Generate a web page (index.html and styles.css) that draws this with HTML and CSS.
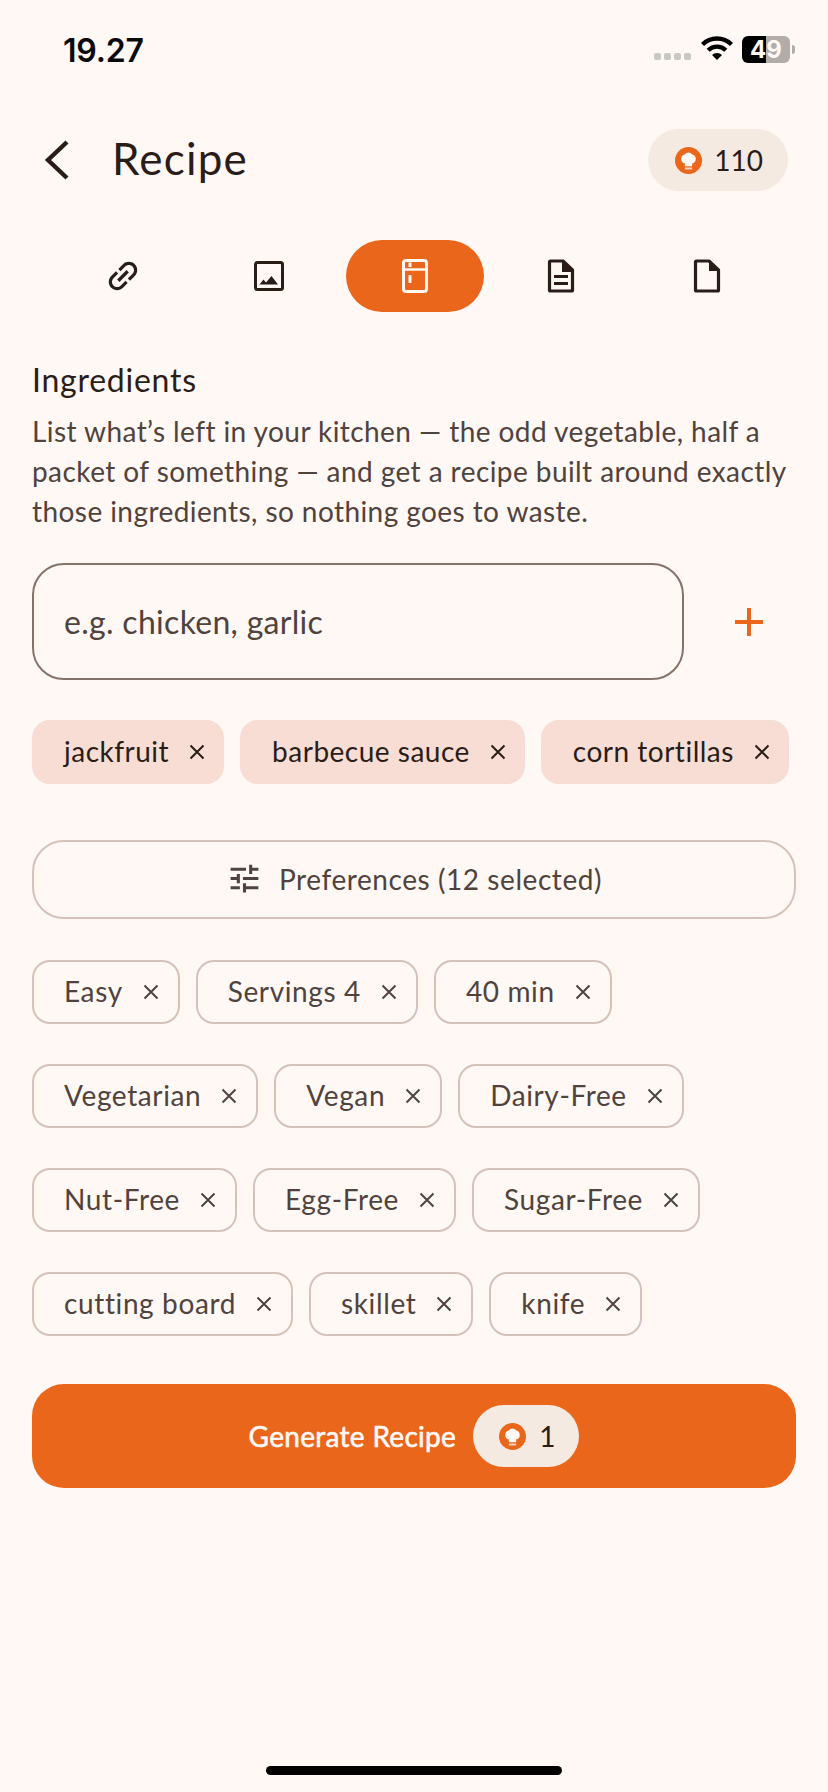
FILE: index.html
```html
<!DOCTYPE html>
<html lang="en">
<head>
<meta charset="utf-8">
<title>Recipe</title>
<link rel="stylesheet" href="styles.css">
</head>
<body>
<svg class="defs" width="0" height="0" aria-hidden="true">
  <defs>
    <symbol id="hat" viewBox="0 0 26 26">
      <circle cx="13" cy="13" r="13" fill="#E9661B"/>
      <path d="M9.500 18.500v-2.600A4.600 4.600 0 0 1 6 11.500 4.400 4.400 0 0 1 9.300 7.300a4.500 4.500 0 0 1 7.400 0A4.400 4.400 0 0 1 20 11.500a4.600 4.600 0 0 1-3.500 4.400v2.600z" fill="#FFF8F5"/>
      <rect x="9.500" y="19.800" width="7" height="1.800" fill="#F7D9C6"/>
    </symbol>
    <symbol id="x" viewBox="0 0 16 16">
      <path d="M1.500 1.500l13 13M14.500 1.500l-13 13" fill="none" stroke="currentColor" stroke-width="2"/>
    </symbol>
  </defs>
</svg>
<main class="app">
  <div class="status">
    <span class="time">19.27</span>
    <div class="status-right">
      <div class="signal"><i></i><i></i><i></i><i></i></div>
      <svg class="wifi" viewBox="0 0 32 24"><path d="M1.500 8.500a20.500 20.500 0 0 1 29 0M7.200 14.200a12.500 12.500 0 0 1 17.600 0" fill="none" stroke="#000" stroke-width="4.400"/><path d="M16 24l-5-5a7 7 0 0 1 10 0z" fill="#000"/></svg>
      <div class="battery">49</div>
      <div class="nub"></div>
    </div>
  </div>

  <header class="header">
    <button class="back" aria-label="Back"><svg viewBox="0 0 26 42" width="26" height="42"><path d="M23 3L4 21l19 18" fill="none" stroke="#2A1D18" stroke-width="4.400"/></svg></button>
    <h1 class="title">Recipe</h1>
    <div class="credits"><svg class="hat"><use href="#hat"/></svg><span>110</span></div>
  </header>

  <nav class="tabs">
    <div class="tab"><svg viewBox="0 0 24 24" width="40" height="40"><path transform="rotate(-45 12 12)" fill="#2A1D18" d="M3.900 12c0-1.710 1.390-3.100 3.100-3.100h4V7H7c-2.760 0-5 2.240-5 5s2.240 5 5 5h4v-1.900H7c-1.710 0-3.100-1.390-3.100-3.100zM8 13h8v-2H8v2zm9-6h-4v1.900h4c1.710 0 3.100 1.390 3.100 3.100s-1.390 3.100-3.100 3.100h-4V17h4c2.760 0 5-2.240 5-5s-2.240-5-5-5z"/></svg></div>
    <div class="tab"><svg viewBox="0 0 40 40" width="40" height="40"><rect x="6.500" y="6.500" width="27" height="27" rx="2" fill="none" stroke="#2A1D18" stroke-width="3"/><path d="M10.500 28.500l4-5 2.500 3 5.500-6.500 6.500 8.500z" fill="#2A1D18"/></svg></div>
    <div class="tab tab-active"><svg viewBox="0 0 40 40" width="40" height="40"><rect x="8.500" y="4.500" width="23" height="31" rx="2.500" fill="none" stroke="#FFF8F5" stroke-width="3"/><path d="M8 13.500h24" stroke="#FFF8F5" stroke-width="2.500"/><path d="M15 6.500v4.500M15 19v8" stroke="#FFF8F5" stroke-width="3"/></svg></div>
    <div class="tab"><svg viewBox="0 0 40 40" width="40" height="40"><path d="M22 5H9.500a1 1 0 0 0-1 1v28a1 1 0 0 0 1 1h21a1 1 0 0 0 1-1V14z" fill="none" stroke="#2A1D18" stroke-width="3.200" stroke-linejoin="round"/><path d="M21 4l12 12H21z" fill="#2A1D18"/><path d="M13 20.500h14M13 27.500h14" stroke="#2A1D18" stroke-width="3"/></svg></div>
    <div class="tab"><svg viewBox="0 0 40 40" width="40" height="40"><path d="M22 5H9.500a1 1 0 0 0-1 1v28a1 1 0 0 0 1 1h21a1 1 0 0 0 1-1V14z" fill="none" stroke="#2A1D18" stroke-width="3.200" stroke-linejoin="round"/><path d="M22 4l11 11H22z" fill="#2A1D18"/></svg></div>
  </nav>

  <section class="content">
    <h2 class="heading">Ingredients</h2>
    <p class="desc">List what’s left in your kitchen — the odd vegetable, half a packet of something — and get a recipe built around exactly those ingredients, so nothing goes to waste.</p>

    <div class="entry">
      <div class="field">e.g. chicken, garlic</div>
      <svg class="plus" viewBox="0 0 28 28" width="28" height="28"><path d="M14 0v28M0 14h28" stroke="#E9661B" stroke-width="4"/></svg>
    </div>

    <div class="chips chips-filled">
      <span class="chip chip-filled">jackfruit<svg class="close"><use href="#x"/></svg></span>
      <span class="chip chip-filled">barbecue sauce<svg class="close"><use href="#x"/></svg></span>
      <span class="chip chip-filled">corn tortillas<svg class="close"><use href="#x"/></svg></span>
    </div>

    <button class="prefs"><svg viewBox="0 0 24 24" width="37" height="37"><path fill="#50433D" d="M3 17v2h6v-2H3zM3 5v2h10V5H3zm10 16v-2h8v-2h-8v-2h-2v6h2zM7 9v2H3v2h4v2h2V9H7zm14 4v-2H11v2h10zm-6-4h2V7h4V5h-4V3h-2v6z"/></svg><span>Preferences (12 selected)</span></button>

    <div class="chips chips-outline">
      <span class="chip chip-outline">Easy<svg class="close"><use href="#x"/></svg></span>
      <span class="chip chip-outline">Servings 4<svg class="close"><use href="#x"/></svg></span>
      <span class="chip chip-outline">40 min<svg class="close"><use href="#x"/></svg></span>
      <span class="chip chip-outline">Vegetarian<svg class="close"><use href="#x"/></svg></span>
      <span class="chip chip-outline">Vegan<svg class="close"><use href="#x"/></svg></span>
      <span class="chip chip-outline">Dairy-Free<svg class="close"><use href="#x"/></svg></span>
      <span class="chip chip-outline">Nut-Free<svg class="close"><use href="#x"/></svg></span>
      <span class="chip chip-outline">Egg-Free<svg class="close"><use href="#x"/></svg></span>
      <span class="chip chip-outline">Sugar-Free<svg class="close"><use href="#x"/></svg></span>
      <span class="chip chip-outline">cutting board<svg class="close"><use href="#x"/></svg></span>
      <span class="chip chip-outline">skillet<svg class="close"><use href="#x"/></svg></span>
      <span class="chip chip-outline">knife<svg class="close"><use href="#x"/></svg></span>
    </div>

    <button class="generate"><span class="generate-label">Generate Recipe</span><span class="cost"><svg class="hat"><use href="#hat"/></svg><span>1</span></span></button>
  </section>

  <div class="home"></div>
</main>
</body>
</html>
```

FILE: styles.css
```css
* { box-sizing: border-box; }
html, body { margin: 0; padding: 0; }
body {
  width: 828px;
  height: 1792px;
  background: #FFF8F5;
  color: #2A1D18;
  font-family: "Lato", "Noto Sans", sans-serif;
  overflow: hidden;
}
.defs { position: absolute; }
.app { display: flex; flex-direction: column; height: 1792px; }

.status {
  height: 100px;
  padding: 32px 33px 0 63px;
  display: flex;
  justify-content: space-between;
  align-items: flex-start;
}
.time {
  font-family: "Inter", sans-serif;
  font-weight: 600;
  font-size: 32px;
  line-height: 38px;
  letter-spacing: -0.2px;
  color: #0A0A0A;
}
.status-right { display: flex; align-items: center; height: 34px; }
.signal { display: flex; gap: 3px; margin-top: 15px; }
.signal i { width: 7px; height: 7px; border-radius: 2px; background: #CBC7C4; }
.wifi { width: 32px; height: 24px; margin-left: 10px; margin-top: -2px; }
.battery {
  width: 48px;
  height: 27px;
  margin-left: 9px;
  border-radius: 6px;
  background: linear-gradient(90deg, #000 50%, #B3ADA9 50%);
  color: #FFF8F5;
  font-family: "Inter", sans-serif;
  font-weight: 700;
  font-size: 24px;
  line-height: 27px;
  text-align: center;
}
.nub { width: 3px; height: 9px; margin-left: 2px; border-radius: 0 3px 3px 0; background: #B3ADA9; }

.header {
  display: flex;
  align-items: center;
  height: 62px;
  margin-top: 29px;
  padding: 0 40px 0 44px;
}
.back { display: flex; padding: 0; border: 0; background: none; }
.title {
  flex: 1;
  margin: -4px 0 0 42px;
  font-size: 44px;
  font-weight: 400;
  line-height: 62px;
  letter-spacing: 1.200px;
}
.credits {
  display: flex;
  align-items: center;
  gap: 12px;
  height: 62px;
  padding: 0 25px 0 27px;
  border-radius: 31px;
  background: #F5EAE2;
  font-size: 28px;
}
.hat { width: 27px; height: 27px; flex: none; }

.tabs {
  display: flex;
  justify-content: center;
  gap: 8px;
  margin-top: 49px;
  padding-left: 2px;
}
.tab {
  width: 138px;
  height: 72px;
  border-radius: 36px;
  display: flex;
  align-items: center;
  justify-content: center;
}
.tab-active { background: #E9661B; }

.content { padding: 0 32px; }
.heading {
  margin: 48px 0 0;
  font-size: 32px;
  font-weight: 400;
  line-height: 40px;
  letter-spacing: 0.750px;
}
.desc {
  margin: 11px 0 0;
  font-size: 28px;
  line-height: 40px;
  letter-spacing: 0.430px;
  color: #50433D;
}

.entry { display: flex; align-items: center; margin-top: 32px; }
.field {
  width: 652px;
  height: 117px;
  padding: 0 0 0 30px;
  display: flex;
  align-items: center;
  border: 2px solid #85736B;
  border-radius: 32px;
  font-size: 32px;
  letter-spacing: 0.300px;
  color: #50433D;
}
.plus { margin-left: 51px; }

.chips { display: flex; flex-wrap: wrap; gap: 40px 16px; }
.chips-filled { margin-top: 40px; }
.chips-outline { margin-top: 41px; }
.chip {
  display: inline-flex;
  align-items: center;
  height: 64px;
  padding-bottom: 2px;
  font-size: 28px;
  letter-spacing: 0.620px;
  white-space: nowrap;
}
.chip-filled {
  padding-left: 32px;
  padding-right: 19px;
  border-radius: 18px;
  background: #F7DDD3;
  color: #2A1D18;
  letter-spacing: 0.500px;
}
.chip-outline {
  padding-left: 30px;
  padding-right: 19px;
  border: 2px solid #D6C2BB;
  border-radius: 18px;
  color: #50433D;
}
.close { width: 16px; height: 16px; margin-left: 20px; margin-top: 2px; flex: none; }

.prefs {
  width: 100%;
  height: 79px;
  margin-top: 56px;
  padding: 0 0 2px;
  display: flex;
  align-items: center;
  justify-content: center;
  gap: 16px;
  background: none;
  border: 2px solid #D6C2BB;
  border-radius: 32px;
  font: inherit;
  font-size: 28px;
  letter-spacing: 0.570px;
  color: #50433D;
}

.generate {
  width: 100%;
  height: 104px;
  margin-top: 48px;
  padding: 0;
  display: flex;
  align-items: center;
  justify-content: center;
  gap: 17px;
  background: #E9661B;
  border: 0;
  border-radius: 32px;
  font: inherit;
  font-size: 28px;
  color: #FFF8F5;
}
.generate-label {
  letter-spacing: 0.300px;
  -webkit-text-stroke: 0.600px #FFF8F5;
}
.cost {
  display: flex;
  align-items: center;
  gap: 13px;
  height: 62px;
  padding: 0 24px 0 26px;
  border-radius: 31px;
  background: #F5EAE2;
  color: #2A1D18;
}

.home {
  width: 296px;
  height: 9px;
  margin: auto auto 17px;
  border-radius: 5px;
  background: #000;
}
```
